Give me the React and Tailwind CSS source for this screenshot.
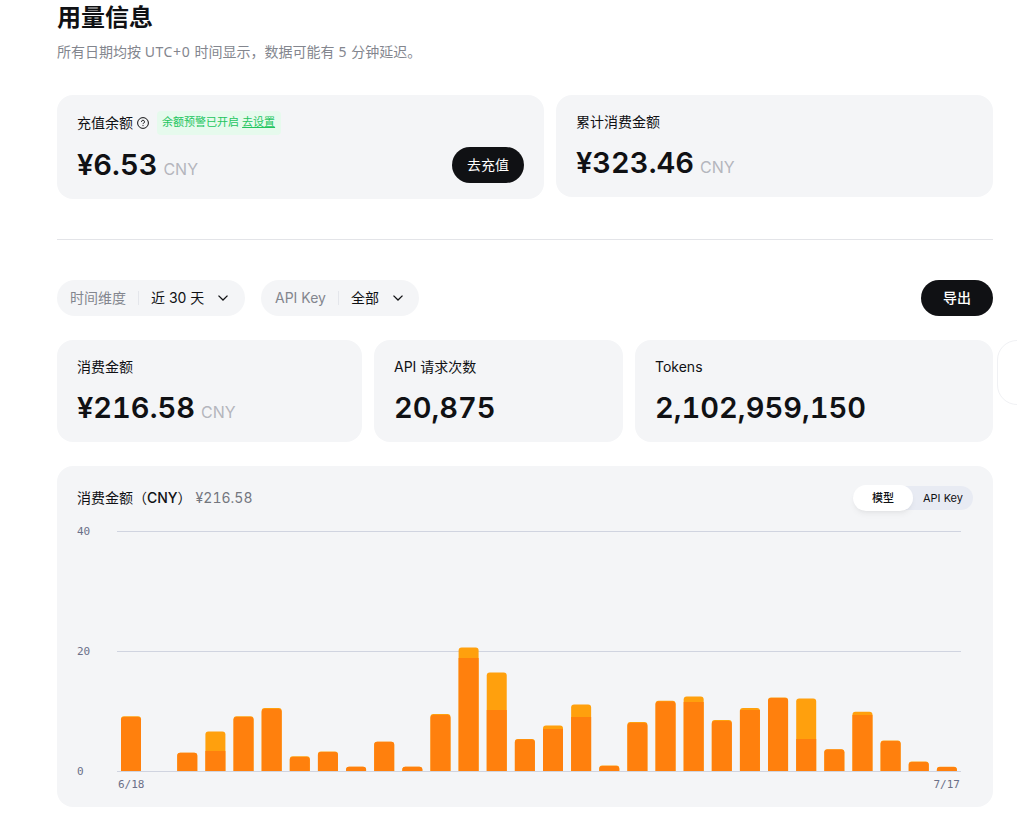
import { useState } from "react";

// [base model cost, second model cost] in chart pixels, 6px = 1 CNY
const days = [
  [54, 0.7], [0, 0], [18.2, 0], [20, 19.5], [54, 0.8], [62, 1], [14, 0.8], [19, 0.6],
  [4.2, 0], [29.2, 0], [4.2, 0], [56, 1], [113, 10.6], [61, 37.5], [31.5, 0.5],
  [42, 3.4], [54, 12.5], [5, 0.4], [48, 1], [69.5, 0.7], [69, 5.4], [50, 1],
  [61, 2.1], [73, 0.6], [32, 40.6], [21.5, 0.3], [56, 3.3], [30, 0.5], [9, 0.6], [4, 0.2],
];

function Money({ value, unit }) {
  return (
    <div className="flex h-9 items-baseline text-[29px] leading-[35px] font-semibold text-[#101114]">
      <span className="tabular-nums">{value}</span>
      {unit && <span className="ml-[6px] text-base font-normal text-[#b4b6bd]">{unit}</span>}
    </div>
  );
}

function StatCard({ title, value, unit, className }) {
  return (
    <div className={"rounded-2xl bg-[#f4f5f7] px-5 pt-4 " + className}>
      <div className="h-[22px] text-sm leading-[22px]">{title}</div>
      <div className="mt-3">
        <Money value={value} unit={unit} />
      </div>
    </div>
  );
}

function Filter({ label, value, className }) {
  return (
    <button className={"flex h-9 items-center rounded-full bg-[#f4f5f7] text-sm " + className}>
      <span className="text-[#83868e]">{label}</span>
      <span className="mx-3 h-[14px] w-px bg-[#e4e6eb]"></span>
      <span>{value}</span>
      <svg className="ml-[14px] h-[6px] w-[10px]" viewBox="0 0 10 6" fill="none" stroke="currentColor" strokeWidth="1.3">
        <path d="M.5.6 5 5 9.5.6" />
      </svg>
    </button>
  );
}

function Chart() {
  const step = 844 / 30;

  return (
    <svg className="block" width="896" height="270" viewBox="0 0 896 270">
      {[40, 20, 0].map((n, i) => (
        <g key={n}>
          <text x="0" y={11 + i * 120} className="fill-[#6b7088] font-['DejaVu_Sans_Mono',monospace] text-[11px]">{n}</text>
          <rect x="40" y={7 + i * 120} width="844" height="1" className="fill-[#d0d4e0]" />
        </g>
      ))}
      {days.map(([a, b], i) => {
        const x = 44 + i * step;
        const h = a + b;
        if (!h) return null;
        const r = 3;
        const top = 247 - h;
        return (
          <g key={i}>
            <path
              d={`M${x} 247V${top + r}q0 ${-r} ${r} ${-r}h${20 - r * 2}q${r} 0 ${r} ${r}V247z`}
              className="fill-[#ffa00d]"
            />
            {b > 2 ? (
              <rect x={x} y={247 - a} width="20" height={a} className="fill-[#ff800d]" />
            ) : (
              <path
                d={`M${x} 247V${247 - a + r}q0 ${-r} ${r} ${-r}h${20 - r * 2}q${r} 0 ${r} ${r}V247z`}
                className="fill-[#ff800d]"
              />
            )}
          </g>
        );
      })}
      <text x="41" y="264" className="fill-[#6b7088] font-['DejaVu_Sans_Mono',monospace] text-[11px]">6/18</text>
      <text x="883" y="264" textAnchor="end" className="fill-[#6b7088] font-['DejaVu_Sans_Mono',monospace] text-[11px]">7/17</text>
    </svg>
  );
}

export default function App() {

  const [tab, setTab] = useState("model");

  return (
    <div className="flex h-[823px] w-[1017px] overflow-hidden bg-white font-['Inter','Noto_Sans_CJK_SC',sans-serif] text-[#101114]">

      <main className="ml-[57px] w-[936px] shrink-0">

        <h1 className="h-[34px] text-2xl leading-[35px] font-bold">用量信息</h1>
        <p className="mt-[7px] h-[22px] font-['Noto_Sans','Noto_Sans_CJK_SC',sans-serif] text-sm leading-[22px] text-[#83868e]">
          所有日期均按 <span className="tracking-[0.6px]">UTC+0 </span>时间显示，数据可能有<span className="tracking-[0.5px]"> 5 </span>分钟延迟。
        </p>

        <div className="mt-8 flex items-start gap-3">
          <div className="h-[104px] w-[487px] rounded-2xl bg-[#f4f5f7] px-5 pt-4">
            <div className="flex h-6 items-center text-sm">
              <span>充值余额</span>
              <svg className="ml-1 size-3" viewBox="0 0 12 12" fill="none" stroke="currentColor">
                <circle cx="6" cy="6" r="5.4" />
                <path d="M4.5 4.8a1.5 1.5 0 1 1 2.2 1.3c-.5.3-.7.5-.7 1" />
                <path d="M6 8.1v1" />
              </svg>
              <span className="ml-2 h-6 rounded bg-[#e6faed] pr-[6px] pl-[5px] text-[11px] leading-[22px] whitespace-nowrap text-[#22c55e]">
                余额预警已开启 <a className="underline">去设置</a>
              </span>
            </div>
            <div className="mt-3 flex items-center justify-between">
              <Money value="¥6.53" unit="CNY" />
              <button className="h-9 w-[72px] rounded-full bg-[#101114] text-sm text-white">去充值</button>
            </div>
          </div>
          <StatCard title="累计消费金额" value="¥323.46" unit="CNY" className="h-[102px] w-[437px]" />
        </div>

        <div className="mt-10 h-px bg-[#e3e4e8]"></div>

        <div className="mt-10 flex items-center">
          <Filter label="时间维度" value="近 30 天" className="w-[188px] pl-[13px]" />
          <Filter label="API Key" value="全部" className="ml-4 w-[158px] pl-[14px]" />
          <button className="ml-auto h-9 w-[72px] rounded-full bg-[#101114] text-sm font-medium text-white">导出</button>
        </div>

        <div className="mt-6 flex gap-3">
          <StatCard title="消费金额" value="¥216.58" unit="CNY" className="h-[102px] w-[305px]" />
          <StatCard title="API 请求次数" value="20,875" className="h-[102px] w-[249px]" />
          <StatCard title="Tokens" value="2,102,959,150" className="h-[102px] w-[358px]" />
        </div>

        <div className="mt-6 h-[341px] rounded-2xl bg-[#f4f5f7] px-5 pt-[19px]">
          <div className="flex h-[26px] items-center text-sm">
            <span>消费金额（<span className="font-medium">CNY</span>）</span>
            <span className="ml-1 text-[#73767e] tabular-nums">¥216.58</span>
            <div className="ml-auto flex h-6 items-center rounded-full bg-[#e8ebf3] text-[11px]">
              <button
                onClick={() => setTab("model")}
                className={tab === "model" ? "h-[26px] w-[60px] rounded-full bg-white pt-px font-medium shadow-md shadow-black/5" : "h-[26px] w-[60px] pt-px"}
              >
                模型
              </button>
              <button
                onClick={() => setTab("key")}
                className={tab === "key" ? "h-[26px] w-[60px] rounded-full bg-white pt-px font-medium shadow-md shadow-black/5" : "h-[26px] w-[60px] pt-px"}
              >
                API Key
              </button>
            </div>
          </div>
          <div className="mt-[13px]">
            <Chart />
          </div>
        </div>

      </main>

      {/* floating side handle */}
      <aside className="mt-[340px] ml-1 h-[65px] w-12 shrink-0 rounded-[20px] border border-[#f0f1f4] bg-white"></aside>

    </div>
  );
}
